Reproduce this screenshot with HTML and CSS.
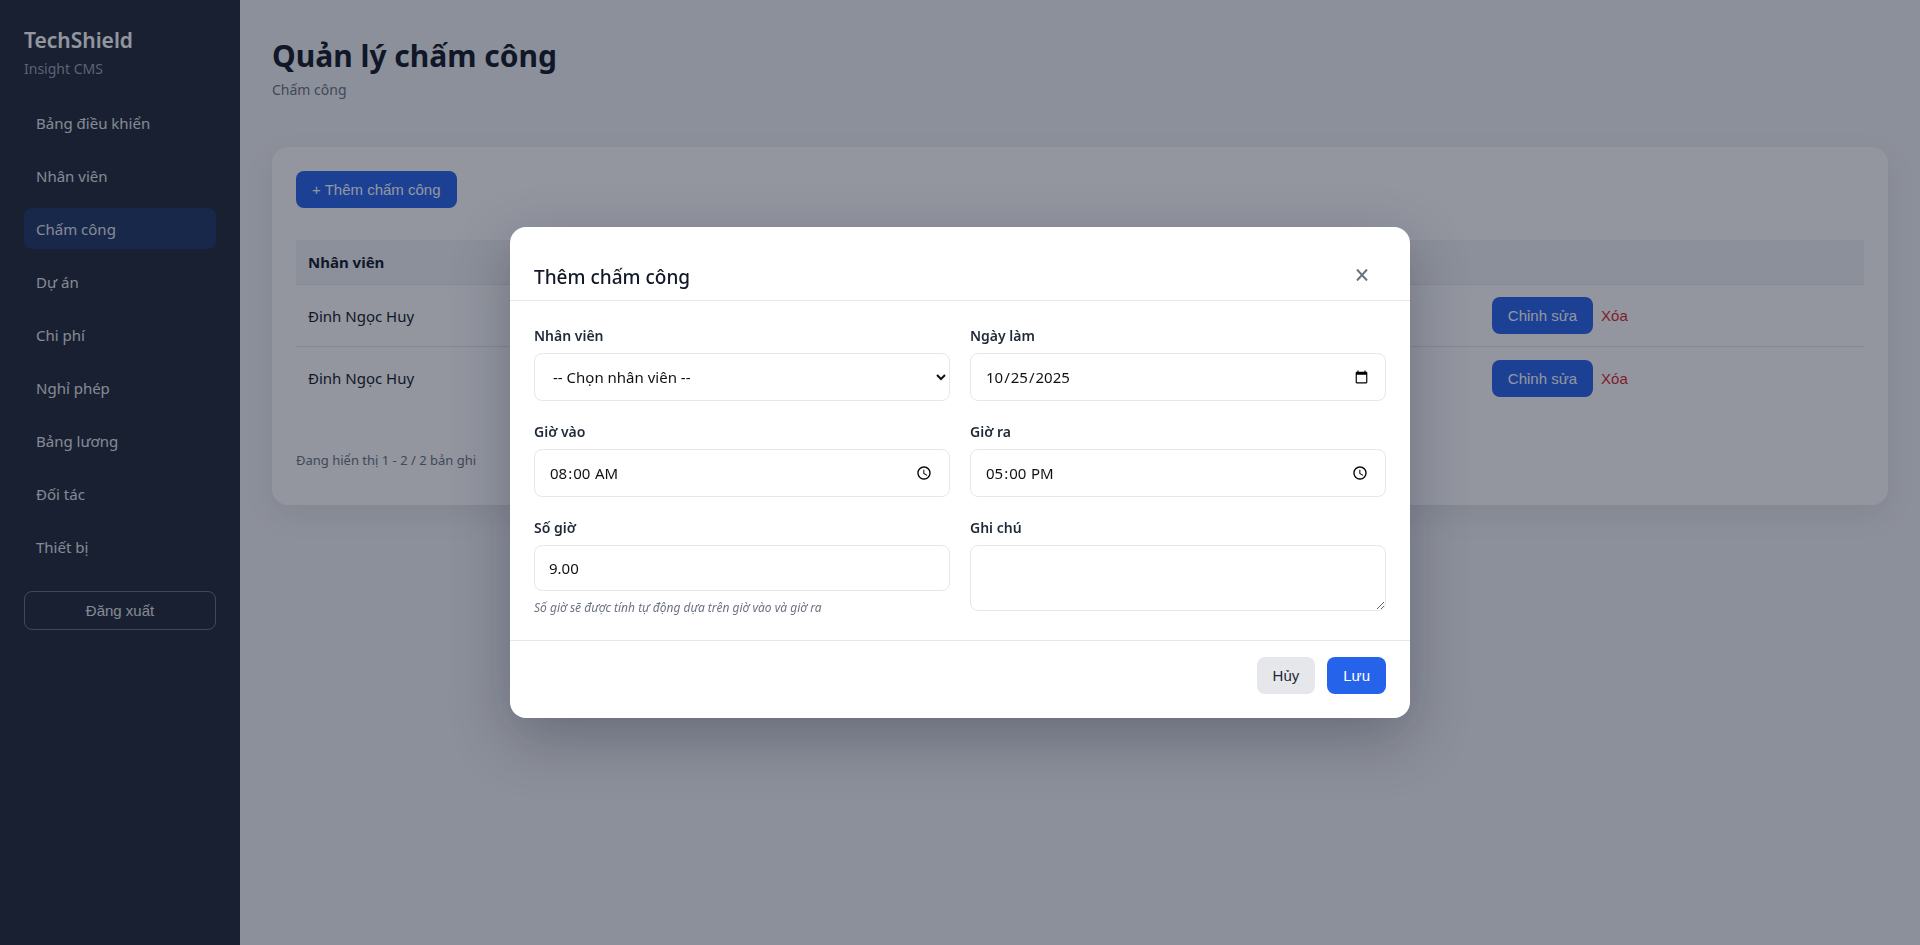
FILE: index.html
```html
<!DOCTYPE html>
<html lang="vi">
<head>
<meta charset="utf-8">
<title>Quản lý chấm công</title>
<link rel="stylesheet" href="styles.css">
</head>
<body>
<div class="layout">
  <aside class="sidebar">
    <div class="brand">TechShield</div>
    <div class="brand-sub">Insight CMS</div>
    <nav class="nav">
      <a href="#">Bảng điều khiển</a>
      <a href="#">Nhân viên</a>
      <a href="#" class="active">Chấm công</a>
      <a href="#">Dự án</a>
      <a href="#">Chi phí</a>
      <a href="#">Nghỉ phép</a>
      <a href="#">Bảng lương</a>
      <a href="#">Đối tác</a>
      <a href="#">Thiết bị</a>
    </nav>
    <button type="button" class="logout">Đăng xuất</button>
  </aside>
  <main class="content">
    <header class="page-head">
      <h1>Quản lý chấm công</h1>
      <p>Chấm công</p>
    </header>
    <section class="card">
      <button type="button" class="btn btn-primary">+ Thêm chấm công</button>
      <table class="table">
        <thead>
          <tr><th class="col-name" scope="col">Nhân viên</th><th class="col-actions"></th></tr>
        </thead>
        <tbody>
          <tr><td>Đinh Ngọc Huy</td><td><div class="actions"><button type="button" class="btn btn-primary">Chỉnh sửa</button><button type="button" class="link-danger">Xóa</button></div></td></tr>
          <tr><td>Đinh Ngọc Huy</td><td><div class="actions"><button type="button" class="btn btn-primary">Chỉnh sửa</button><button type="button" class="link-danger">Xóa</button></div></td></tr>
        </tbody>
      </table>
      <p class="summary">Đang hiển thị 1 - 2 / 2 bản ghi</p>
    </section>
  </main>
</div>

<div class="backdrop">
  <form class="modal" role="dialog" aria-modal="true" aria-labelledby="modal-title">
    <header class="modal-head">
      <h2 id="modal-title">Thêm chấm công</h2>
      <button type="button" class="close" aria-label="Đóng">
        <svg width="12" height="12" viewBox="0 0 12 12" aria-hidden="true"><path d="M1 .5l10 11M11 .5L1 11.5" stroke="currentColor" stroke-width="2" fill="none"/></svg>
      </button>
    </header>
    <div class="modal-body">
      <div class="field">
        <label for="employee">Nhân viên</label>
        <select id="employee"><option>-- Chọn nhân viên --</option></select>
      </div>
      <div class="field">
        <label for="day">Ngày làm</label>
        <input id="day" type="date" value="2025-10-25">
      </div>
      <div class="field">
        <label for="in">Giờ vào</label>
        <input id="in" type="time" value="08:00">
      </div>
      <div class="field">
        <label for="out">Giờ ra</label>
        <input id="out" type="time" value="17:00">
      </div>
      <div class="field">
        <label for="hours">Số giờ</label>
        <input id="hours" class="compact" type="text" value="9.00" readonly>
        <small>Số giờ sẽ được tính tự động dựa trên giờ vào và giờ ra</small>
      </div>
      <div class="field">
        <label for="note">Ghi chú</label>
        <textarea id="note"></textarea>
      </div>
    </div>
    <footer class="modal-foot">
      <button type="button" class="btn btn-muted">Hủy</button>
      <button type="submit" class="btn btn-primary">Lưu</button>
    </footer>
  </form>
</div>
</body>
</html>
```
FILE: styles.css
```css
* { box-sizing: border-box; }
body {
  margin: 0;
  font-family: "Noto Sans", "Open Sans", sans-serif;
  font-size: 15px;
  color: #111827;
  background: #f3f4f6;
}
h1, h2, p { margin: 0; }
button, input, select, textarea { font: inherit; }
.layout { display: flex; min-height: 100vh; }

.sidebar {
  width: 240px;
  flex: none;
  padding: 24px;
  background: #1f2937;
  color: #fff;
}
.brand { font-size: 21px; font-weight: 600; line-height: 32px; }
.brand-sub { font-size: 14px; line-height: 26px; color: #9ca3af; }
.nav { display: flex; flex-direction: column; gap: 12px; margin-top: 20px; }
.nav a {
  padding: 2px 12px 0;
  border-radius: 8px;
  line-height: 39px;
  color: #e5e7eb;
  text-decoration: none;
}
.nav a.active { background: rgba(37, 99, 235, 0.25); }
.logout {
  width: 100%;
  height: 39px;
  margin-top: 24px;
  border: 1px solid #6b7280;
  border-radius: 8px;
  background: transparent;
  font-family: "Liberation Sans", Arial, sans-serif;
  color: #e5e7eb;
}

.content { flex: 1; min-width: 0; padding: 32px; }
.page-head { margin-bottom: 47px; }
.page-head h1 { font-size: 30px; font-weight: 700; line-height: 48px; }
.page-head p { font-size: 14px; line-height: 20px; color: #6b7280; }
.card {
  padding: 24px;
  border-radius: 16px;
  background: #fff;
  box-shadow: 0 10px 30px rgba(15, 23, 42, 0.08);
}
.btn {
  height: 37px;
  padding: 0 16px;
  border: 0;
  border-radius: 8px;
  font-family: "Liberation Sans", Arial, sans-serif;
  font-size: 15px;
}
.btn-primary { background: #2563eb; color: #fff; }
.btn-muted { background: #e5e7eb; color: #1f2937; }
.table { width: 100%; margin-top: 32px; border-collapse: separate; border-spacing: 0; }
.table th {
  height: 45px;
  padding: 0 12px;
  border-bottom: 1px solid #e5e7eb;
  background: #f3f4f6;
  text-align: left;
}
.table td { height: 62px; padding: 12px; }
.table tbody tr:first-child td { border-bottom: 1px solid #e5e7eb; }
.col-actions { width: 24.5%; }
.actions { display: flex; align-items: center; gap: 8px; }
.link-danger {
  padding: 0;
  border: 0;
  background: none;
  font-family: "Liberation Sans", Arial, sans-serif;
  color: #dc2626;
}
.summary { margin: 41px 0 11px; font-size: 13px; line-height: 20px; color: #6b7280; }

.backdrop {
  position: fixed;
  inset: 0;
  display: flex;
  align-items: center;
  justify-content: center;
  background: rgba(15, 23, 42, 0.45);
}
.modal {
  width: 900px;
  max-width: 92%;
  border-radius: 16px;
  background: #fff;
  box-shadow: 0 20px 60px rgba(15, 23, 42, 0.3);
}
.modal-head {
  display: flex;
  align-items: center;
  justify-content: space-between;
  padding: 36px 40px 9px 24px;
  border-bottom: 1px solid #e5e7eb;
}
.modal-head h2 { font-size: 19px; font-weight: 500; line-height: 28px; }
.close {
  display: flex;
  padding: 2px 2px 6px;
  border: 0;
  background: none;
  color: #6b7280;
}
.modal-body {
  display: grid;
  grid-template-columns: 1fr 1fr;
  gap: 20px;
  padding: 24px 24px 23px;
}
.field { display: flex; flex-direction: column; }
.field label { font-size: 14px; font-weight: 600; line-height: 22px; margin-bottom: 6px; color: #1f2937; }
.field input, .field select, .field textarea {
  width: 100%;
  height: 48px;
  padding: 0 14px;
  border: 1px solid #e5e7eb;
  border-radius: 8px;
  background: #fff;
  color: #111;
}
.field .compact { height: 46px; }
.field textarea { height: 66px; resize: vertical; }
.field small { margin-top: 8px; font-size: 12px; line-height: 18px; font-style: italic; color: #6b7280; }
.modal-foot {
  display: flex;
  justify-content: flex-end;
  gap: 12px;
  padding: 16px 24px 24px;
  border-top: 1px solid #e5e7eb;
}
```
